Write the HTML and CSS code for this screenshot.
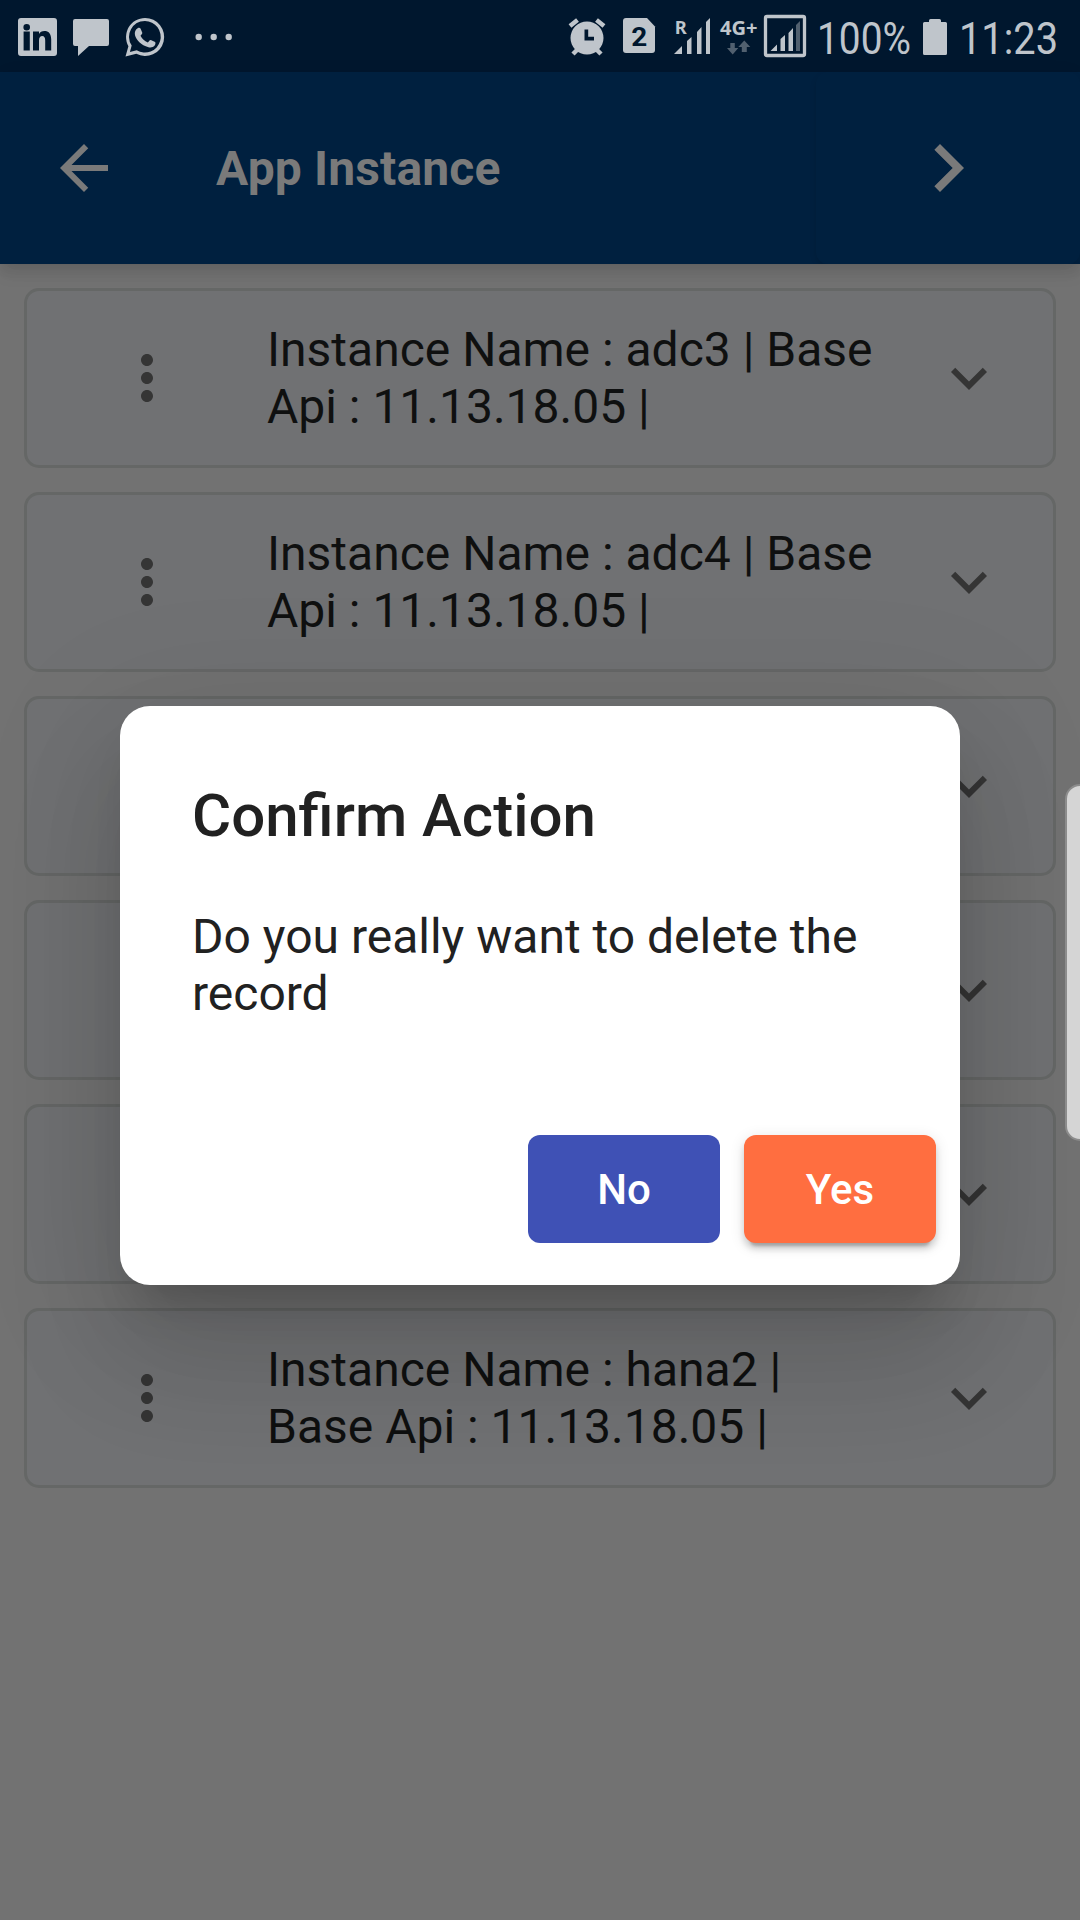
FILE: index.html
```html
<!DOCTYPE html>
<html lang="en">
<head>
<meta charset="utf-8">
<title>App Instance</title>
<link rel="stylesheet" href="styles.css">
</head>
<body>
<svg class="sprite" aria-hidden="true">
  <symbol id="more" viewBox="0 0 24 24"><path d="M12 8c1.1 0 2-.9 2-2s-.9-2-2-2-2 .9-2 2 .9 2 2 2zm0 2c-1.1 0-2 .9-2 2s.9 2 2 2 2-.9 2-2-.9-2-2-2zm0 6c-1.1 0-2 .9-2 2s.9 2 2 2 2-.9 2-2-.9-2-2-2z"/></symbol>
  <symbol id="expand" viewBox="0 0 24 24"><path d="M16.59 8.59L12 13.17 7.41 8.59 6 10l6 6 6-6z"/></symbol>
</svg>
<div class="screen">
  <div class="status">
    <svg class="status-left" width="250" height="72" viewBox="0 0 250 72">
      <path fill-rule="evenodd" d="M21 18h33a3 3 0 0 1 3 3v32a3 3 0 0 1-3 3H21a3 3 0 0 1-3-3V21a3 3 0 0 1 3-3zM23.6 31.500v19h6.200v-19zM26.700 24a3.300 3.300 0 1 0 0 6.600a3.300 3.300 0 0 0 0-6.600zM33 31.500v19h6V40.500c0-3 1.200-4.500 3.200-4.500s3 1.500 3 4.500v10h6V39.500c0-6-2.800-8.500-6.700-8.500-2.800 0-4.500 1.300-5.500 3v-2.500z"/>
      <path d="M75 19h32a2 2 0 0 1 2 2v23a2 2 0 0 1-2 2H89L78 56V46h-3a2 2 0 0 1-2-2V21a2 2 0 0 1 2-2z"/>
      <path fill-rule="evenodd" d="M145 18a19 19 0 1 1-8.700 35.800L125.500 56.500l2.900-10.300A19 19 0 0 1 145 18zm0 3a15.800 15.800 0 0 0-13.300 24.500l-1.800 6.600 6.800-1.800A15.800 15.800 0 1 0 145 21z"/>
      <path d="M138 28c1-.6 2-.4 2.500.6l1.700 3.900c.3.800 0 1.400-1.700 3.300 1.700 3.200 4 5.200 7.300 6.700 1.800-2.200 2.300-2.800 3-2.500l4.300 2.100c.7.500.4 2.600-.6 3.700-1.400 1.400-3.600 2.100-6 1.400-7.500-2-12.300-7.400-13.500-12-.7-3 .4-5.800 3-7.200z"/>
      <circle cx="198.700" cy="37" r="3.200"/><circle cx="213.700" cy="37" r="3.200"/><circle cx="228.700" cy="37" r="3.200"/>
    </svg>
    <svg class="status-right" width="530" height="72" viewBox="550 0 530 72">
      <path fill-rule="evenodd" d="M587 21.500a16.500 16.500 0 1 1 0 33a16.500 16.500 0 0 1 0-33zM584.500 29.500v11h9.500v-3.700h-5.800v-7.300z"/>
      <path class="thick" d="M570 26l7.500-6M604 26l-7.500-6"/>
      <path class="thick" d="M578 49l-5 5M596 49l5 5"/>
      <path d="M626 18h21l8 8.500V50a3 3 0 0 1-3 3h-26a3 3 0 0 1-3-3V21a3 3 0 0 1 3-3z"/>
      <text class="sim" x="631.300" y="46" font-size="26" textLength="16" lengthAdjust="spacingAndGlyphs">2</text>
      <text class="net" x="674.800" y="34" font-size="18.500" textLength="12" lengthAdjust="spacingAndGlyphs">R</text>
      <path d="M674 54l8-8v8zM687 54V41l4.500-4v17zM697 54V32l4.500-5v27zM706 54V22l4-4v36z"/>
      <text class="net" x="720" y="35" font-size="19.500" textLength="37.500" lengthAdjust="spacingAndGlyphs">4G+</text>
      <path class="dim" d="M730.300 43h4.500v5h3.500l-5.600 6.500-5.700-6.500h3.300zM741.800 52h5v-5h3.500l-6-6.500-6 6.500h3.500z"/>
      <rect class="frame" x="765.500" y="16.500" width="39" height="39" rx="1.500"/>
      <path d="M770.500 51l6.500-6.500v6.500zM780.500 51V39l4.500-4v16zM788.500 51V33l4.500-5v23z"/>
      <path class="dim" d="M796 51V25l4-4v30z"/>
      <text class="clock" x="817" y="54" font-size="45" textLength="94" lengthAdjust="spacingAndGlyphs">100%</text>
      <path d="M929 22v-1.500a1.500 1.500 0 0 1 1.500-1.500h9a1.500 1.500 0 0 1 1.500 1.500V22h4.500a1.500 1.500 0 0 1 1.500 1.500v30a1.500 1.500 0 0 1-1.500 1.500h-21a1.500 1.500 0 0 1-1.500-1.500v-30a1.500 1.500 0 0 1 1.500-1.500z"/>
      <text class="clock" x="959" y="54" font-size="45" textLength="99" lengthAdjust="spacingAndGlyphs">11:23</text>
    </svg>
  </div>
  <header class="toolbar">
    <svg class="back" viewBox="0 0 24 24"><path d="M20 11H7.830l5.590-5.590L12 4l-8 8 8 8 1.410-1.410L7.830 13H20v-2z"/></svg>
    <h1 class="title">App Instance</h1>
    <div class="next"><svg viewBox="0 0 24 24"><path d="M10 6L8.590 7.410 13.170 12l-4.580 4.590L10 18l6-6z"/></svg></div>
  </header>
  <main class="list">
    <div class="item"><svg class="icon"><use href="#more"/></svg><p class="label">Instance Name : adc3 | Base Api : 11.13.18.05 |</p><svg class="icon"><use href="#expand"/></svg></div>
    <div class="item"><svg class="icon"><use href="#more"/></svg><p class="label">Instance Name : adc4 | Base Api : 11.13.18.05 |</p><svg class="icon"><use href="#expand"/></svg></div>
    <div class="item"><svg class="icon"><use href="#more"/></svg><p class="label"></p><svg class="icon"><use href="#expand"/></svg></div>
    <div class="item"><svg class="icon"><use href="#more"/></svg><p class="label"></p><svg class="icon"><use href="#expand"/></svg></div>
    <div class="item"><svg class="icon"><use href="#more"/></svg><p class="label"></p><svg class="icon"><use href="#expand"/></svg></div>
    <div class="item"><svg class="icon"><use href="#more"/></svg><p class="label">Instance Name : hana2 | Base Api : 11.13.18.05 |</p><svg class="icon"><use href="#expand"/></svg></div>
  </main>
  <div class="dialog" role="dialog">
    <h2 class="dialog-title">Confirm Action</h2>
    <p class="dialog-text">Do you really want to delete the record</p>
    <div class="actions">
      <button class="btn btn-no">No</button>
      <button class="btn btn-yes">Yes</button>
    </div>
  </div>
  <div class="edge-handle"></div>
</div>
</body>
</html>
```

FILE: styles.css
```css
* { box-sizing: border-box; }
body { margin: 0; font-family: Roboto, sans-serif; }
h1, h2, p { margin: 0; }
.sprite { position: absolute; width: 0; height: 0; }

.screen {
  position: relative;
  width: 1080px;
  height: 1920px;
  overflow: hidden;
  display: flex;
  flex-direction: column;
  background: #727272;
}

.status {
  display: flex;
  justify-content: space-between;
  height: 72px;
  background: #00172e;
  fill: #bfc5cb;
}
.status .thick { fill: none; stroke: #bfc5cb; stroke-width: 4.500; }
.status .frame { fill: none; stroke: #bfc5cb; stroke-width: 3.300; }
.status .dim { fill: #51606f; }
.status .sim { fill: #00172e; font-weight: 700; }
.net { font-family: "Noto Sans", sans-serif; font-weight: 700; }

.toolbar {
  position: relative;
  z-index: 1;
  display: flex;
  align-items: center;
  height: 192px;
  padding-left: 48px;
  background: #00203f;
  fill: #7a7a7a;
  color: #7a7a7a;
  box-shadow: 0 6px 12px -3px rgba(0,0,0,.1), 0 12px 15px 0 rgba(0,0,0,.05), 0 3px 24px 0 rgba(0,0,0,.03);
}
.back { width: 72px; height: 72px; }
.title { flex: 1; margin-left: 96px; padding-top: 2px; font-size: 48px; font-weight: 700; line-height: 60px; letter-spacing: .15px; }
.next {
  display: flex;
  align-items: center;
  width: 264px;
  height: 192px;
  padding-left: 84px;
  border-radius: 12px;
  box-shadow: 0 3px 6px rgba(0,0,0,.12);
  clip-path: inset(0 0 0 -6px);
}
.next svg { width: 96px; height: 96px; }

.list {
  display: flex;
  flex-direction: column;
  gap: 24px;
  padding: 24px;
}
.item {
  display: grid;
  grid-template-columns: 72px 612px 72px;
  column-gap: 84px;
  align-items: center;
  justify-content: start;
  height: 180px;
  padding-left: 84px;
  border: 3px solid #656766;
  border-radius: 15px;
  background: #707173;
}
.item .icon { width: 72px; height: 72px; fill: #353535; }
.item .icon:last-child { margin-left: -30px; }
.label { font-size: 48px; line-height: 57px; color: #0f1010; }

.dialog {
  position: absolute;
  left: 120px;
  top: 706px;
  width: 840px;
  height: 579px;
  display: flex;
  flex-direction: column;
  padding: 74px 24px 42px 72px;
  border-radius: 30px;
  background: #fff;
  color: #212121;
  box-shadow: 0 33px 45px -21px rgba(0,0,0,.2), 0 72px 114px 9px rgba(0,0,0,.1), 0 27px 138px 24px rgba(0,0,0,.08);
}
.dialog-title { font-size: 60px; font-weight: 500; line-height: 72px; }
.dialog-text { width: 696px; margin-top: 56px; font-size: 48px; line-height: 57px; }
.actions { display: flex; justify-content: flex-end; gap: 24px; margin-top: auto; }
.btn {
  width: 192px;
  height: 108px;
  padding: 2px 0 0;
  border: 0;
  border-radius: 12px;
  font: 500 42px/106px Roboto, sans-serif;
  color: #fff;
}
.btn-no { background: #3f51b5; }
.btn-yes {
  background: #ff6e40;
  box-shadow: 0 9px 3px -6px rgba(0,0,0,.2), 0 6px 6px 0 rgba(0,0,0,.14), 0 3px 15px 0 rgba(0,0,0,.12);
}

.edge-handle {
  position: absolute;
  left: 1065px;
  top: 784px;
  width: 30px;
  height: 357px;
  border: 2px solid #8c8c8c;
  border-radius: 18px;
  background: #d5d5d5;
}
```
